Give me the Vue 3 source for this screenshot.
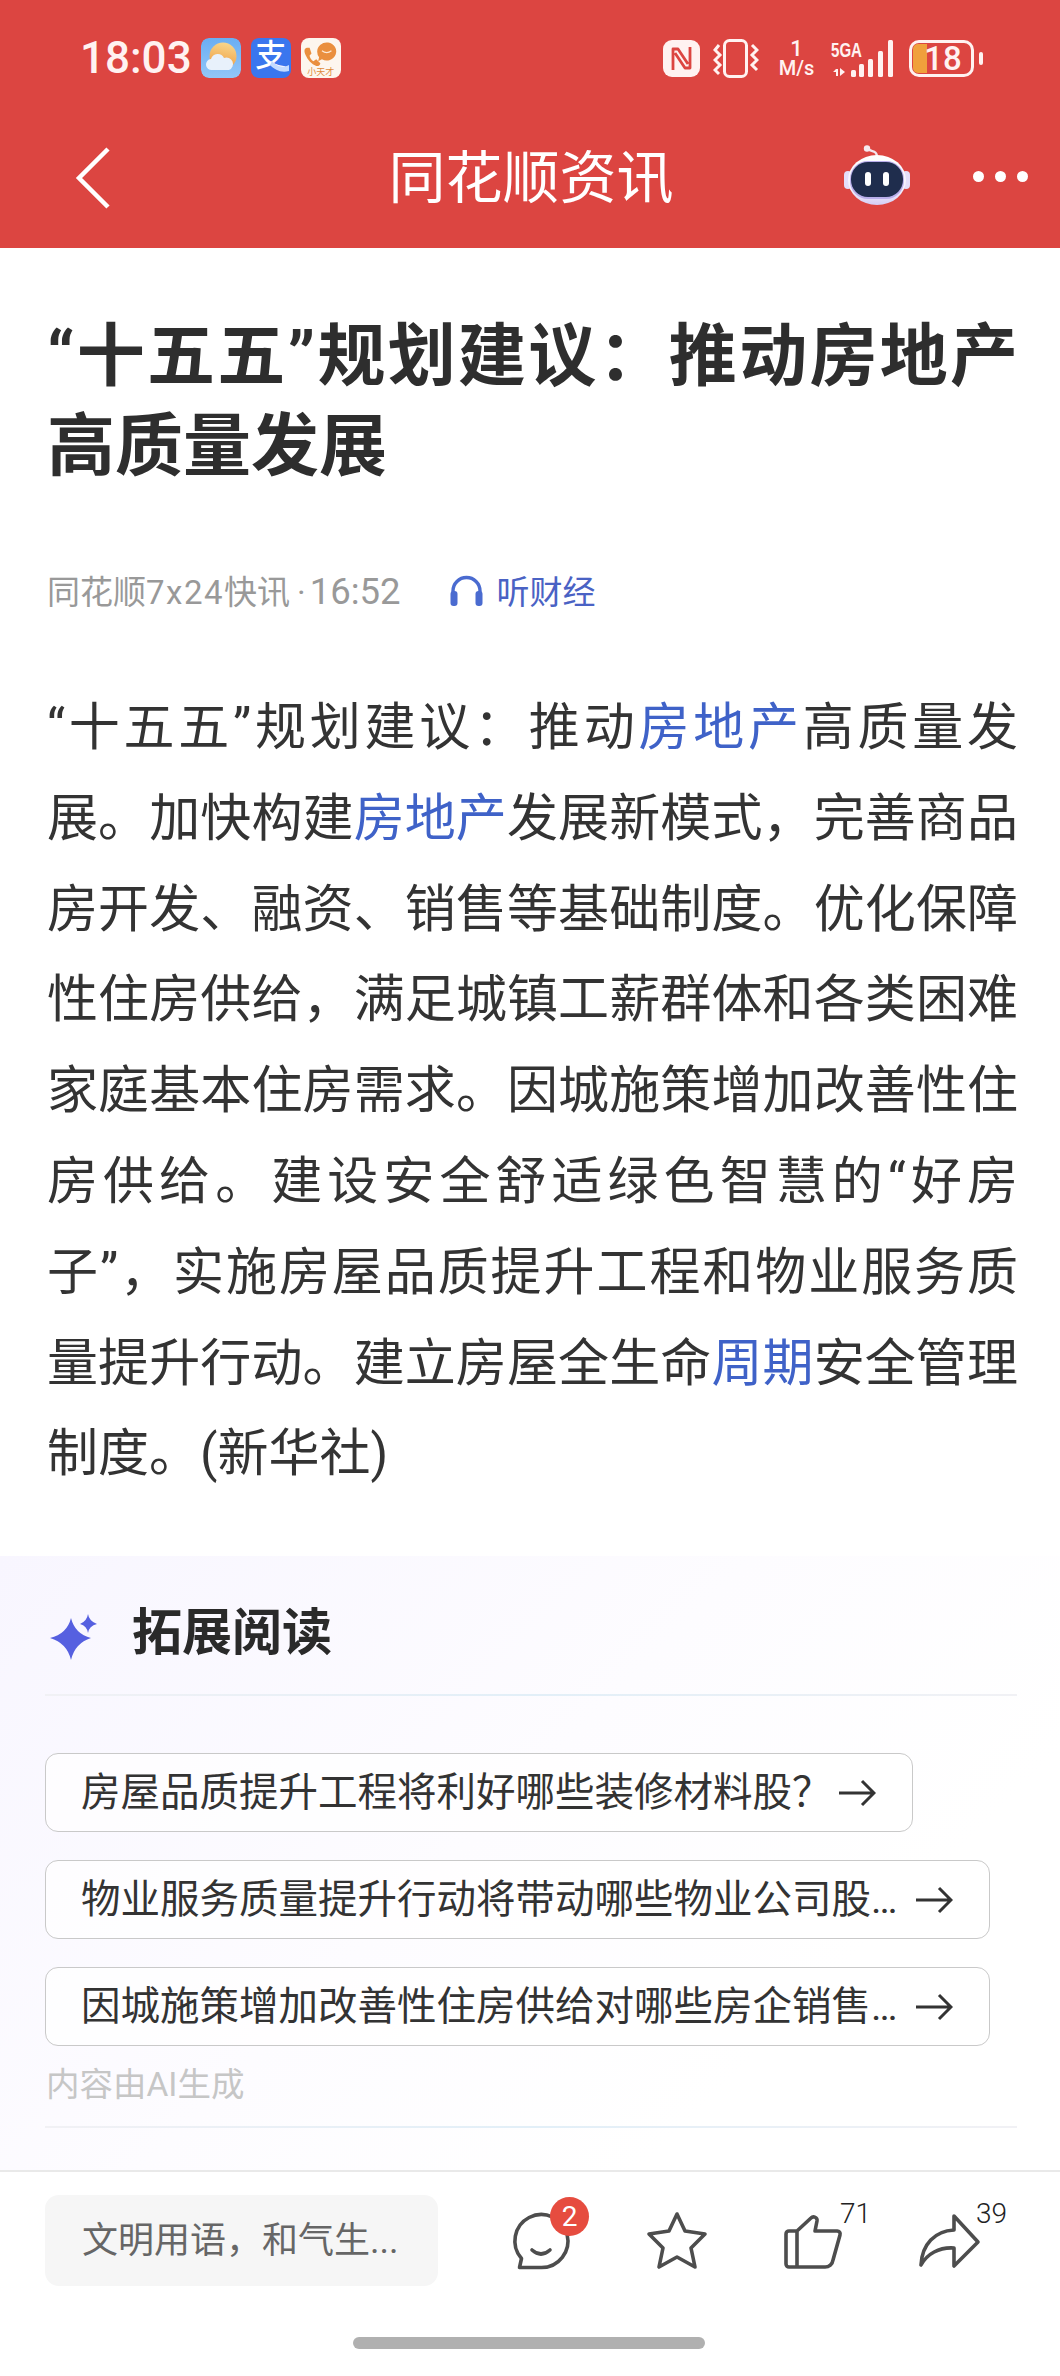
<template>
  <div class="page">
    <header class="top">
      <div class="status">
        <div class="status-left">
          <span class="clock">18:03</span>
          <!-- 天气 -->
          <svg class="app-icon" viewBox="0 0 40 40">
            <defs>
              <linearGradient id="sky" x1="0" y1="0" x2="0" y2="1">
                <stop offset="0" stop-color="#6aaef3" />
                <stop offset="1" stop-color="#93c6f8" />
              </linearGradient>
              <linearGradient id="sun" x1="0.6" y1="0" x2="0.4" y2="1">
                <stop offset="0" stop-color="#f8d68c" />
                <stop offset="1" stop-color="#ef9a3c" />
              </linearGradient>
            </defs>
            <rect width="40" height="40" rx="8" fill="url(#sky)" />
            <circle cx="22" cy="18" r="13.5" fill="url(#sun)" />
            <path d="M11 32 a5.5 5.5 0 0 1 -1 -11 a7 7 0 0 1 13 -1 a6 6 0 0 1 5 12 z" fill="#e8f1fb" />
          </svg>
          <!-- 支付宝 -->
          <div class="app-icon alipay">
            <span>支</span>
            <svg class="swoosh" viewBox="0 0 40 40">
              <path d="M21 23 C26 29 32 30 38 27 L38 33 C30 35 24 32 19 27 Z" fill="#c5dbff" />
            </svg>
          </div>
          <!-- 小天才 -->
          <div class="app-icon genius">
            <svg viewBox="0 0 40 28">
              <path d="M16 11 a10 9.5 0 1 1 5 8 l-4 2 l1 -4 a10 10 0 0 1 -2 -6 z" fill="#ea8f3e" />
              <path d="M21 10 q5 4 10 0" fill="none" stroke="#fde9d4" stroke-width="1.2" />
              <path d="M5 7 c-3 1 -3 4 -1 8 c2 5 6 9 11 11 c3 1 5 -2 4 -3 l-4 -4 l-3 2 c-2 -1 -4 -4 -4 -6 l2 -2 l-2 -6 z" fill="#ea8f3e" />
            </svg>
            <span>小天才</span>
          </div>
        </div>
        <div class="status-right">
          <svg class="ic-nfc" viewBox="0 0 37 37">
            <rect width="37" height="37" rx="9" fill="#fff2f1" />
            <path d="M10 30 V9 H15 L25 24 M27 7 V28 H22 L12 13" fill="none" stroke="#dc4541" stroke-width="2.8" stroke-linejoin="round" />
          </svg>
          <svg class="ic-vibrate" viewBox="0 0 46 39">
            <rect x="11.5" y="1.5" width="22" height="36" rx="5" fill="none" stroke="#fff2f1" stroke-width="3" />
            <path d="M6 6 L2 11 L7 16 L2 21 L7 26 L2 31 L6 35 M39 6 L44 11 L39 16 L44 21 L39 26 L44 31" fill="none" stroke="#fff2f1" stroke-width="3" />
          </svg>
          <div class="speed"><b>1</b><span>M/s</span></div>
          <svg class="ic-signal" viewBox="0 0 64 39">
            <text x="1" y="18" textLength="31" lengthAdjust="spacingAndGlyphs" class="sig-text">5GA</text>
            <path d="M6 30 h2 v7 h-2 v-4 h-3 z M10 29 l5 4 l-5 4 z" fill="#fff2f1" />
            <rect x="21" y="31" width="5" height="7" rx="1.5" fill="#fff2f1" />
            <rect x="29" y="25" width="5" height="13" rx="1.5" fill="#fff2f1" />
            <rect x="38" y="20" width="5" height="18" rx="1.5" fill="#fff2f1" />
            <rect x="48" y="12" width="5" height="26" rx="1.5" fill="#fff2f1" />
            <rect x="58" y="1" width="5" height="37" rx="1.5" fill="#fff2f1" />
          </svg>
          <div class="battery">
            <div class="battery-body">
              <i class="battery-fill"></i>
              <span>18</span>
            </div>
            <i class="battery-tip"></i>
          </div>
        </div>
      </div>
      <div class="nav">
        <svg class="back" viewBox="0 0 36 64">
          <path d="M33 3 L4 32 L33 61" fill="none" stroke="#fff" stroke-width="4.5" />
        </svg>
        <h2 class="nav-title">同花顺资讯</h2>
        <svg class="robot" viewBox="0 0 66 60">
          <defs>
            <linearGradient id="shell" x1="0" y1="0" x2="0" y2="1">
              <stop offset="0" stop-color="#ffffff" />
              <stop offset="0.7" stop-color="#f3effc" />
              <stop offset="1" stop-color="#d5cdf5" />
            </linearGradient>
          </defs>
          <path d="M23 3 C27 8 32 4 33 11" fill="none" stroke="#f3e6ee" stroke-width="2.4" />
          <circle cx="23" cy="3.5" r="3.2" fill="#f6e9ef" />
          <rect x="0" y="26" width="8" height="18" rx="4" fill="#e4defa" />
          <rect x="58" y="26" width="8" height="18" rx="4" fill="#e4defa" />
          <ellipse cx="33" cy="35" rx="29" ry="25" fill="url(#shell)" />
          <rect x="6" y="16" width="54" height="38" rx="18" fill="#b9aeea" />
          <rect x="7" y="17" width="52" height="35" rx="17" fill="#1f2d4d" />
          <rect x="21" y="27" width="6" height="14" rx="3" fill="#fff" />
          <rect x="39" y="27" width="6" height="14" rx="3" fill="#fff" />
        </svg>
        <div class="more"><i></i><i></i><i></i></div>
      </div>
    </header>

    <article class="article">
      <h1 class="title">“十五五”规划建议：推动房地产高质量发展</h1>
      <div class="meta">
        <span>同花顺<span class="num">7x24</span>快讯<span class="dot">·</span><span class="time">16:52</span></span>
        <a class="listen">
          <svg class="headset" viewBox="0 0 35 32">
            <path d="M4 28 V17 a13.5 13.5 0 0 1 27 0 V28" fill="none" stroke="#4a6bd0" stroke-width="3.4" />
            <rect x="1.5" y="17" width="7" height="15" rx="3" fill="#4a6bd0" />
            <rect x="26.5" y="17" width="7" height="15" rx="3" fill="#4a6bd0" />
          </svg>
          听财经
        </a>
      </div>
      <p class="body">“十五五”规划建议：推动<span class="link">房地产</span>高质量发展。加快构建<span class="link">房地产</span>发展新模式，完善商品房开发、融资、销售等基础制度。优化保障性住房供给，满足城镇工薪群体和各类困难家庭基本住房需求。因城施策增加改善性住房供给。建设安全舒适绿色智慧的“好房子”，实施房屋品质提升工程和物业服务质量提升行动。建立房屋全生命<span class="link">周期</span>安全管理制度。(新华社)</p>
    </article>

    <section class="extend">
      <div class="extend-head">
        <svg class="spark" viewBox="0 0 47 46">
          <path d="M21 4 Q25 20 41 24 Q25 29 21 46 Q17 29 0 24 Q17 20 21 4 Z" fill="#5660e0" />
          <path d="M38 0 Q39 7 47 10 Q39 12 38 19 Q37 12 30 10 Q37 7 38 0 Z" fill="#5660e0" />
        </svg>
        <h3>拓展阅读</h3>
      </div>
      <div class="rule"></div>
      <div class="questions">
        <div v-for="q in questions" :key="q.text" class="question" :class="{ long: q.long }">
          <span class="q-text">{{ q.text }}</span>
          <svg class="q-arrow" viewBox="0 0 38 28">
            <path d="M1 14 H36 M24 2 L36 14 L24 26" fill="none" stroke="#333" stroke-width="3" />
          </svg>
        </div>
      </div>
      <p class="ai-note">内容由AI生成</p>
      <div class="rule"></div>
    </section>

    <footer class="bottom">
      <div class="bar">
        <div class="comment-input"><span>文明用语，和气生...</span></div>
        <div class="actions">
          <div class="action">
            <svg viewBox="0 0 60 60">
              <path d="M8.5 57.5 H30.5 A26.5 26.5 0 1 0 10.5 48.5 Z" class="line" />
              <path d="M21 40 Q30 48 39 40" class="line" />
            </svg>
            <span class="badge">2</span>
          </div>
          <div class="action">
            <svg viewBox="0 0 60 60">
              <path d="M30 4 L38 21 L58 24 L44 38 L48 57 L30 47 L12 57 L16 38 L2 24 L22 21 Z" class="line" />
            </svg>
          </div>
          <div class="action">
            <svg viewBox="0 0 60 60">
              <path d="M14 21 L28 8 a3.5 3.5 0 0 1 6 3 L32 21 H54 a3 3 0 0 1 3 4 L50 50 a8 8 0 0 1 -8 7 H6 a3 3 0 0 1 -3 -3 V24 a3 3 0 0 1 3 -3 Z M14 21 V57" class="line" />
            </svg>
            <span class="count">71</span>
          </div>
          <div class="action">
            <svg viewBox="0 0 60 60">
              <path d="M35 6 L59 32 L35 56 V38 C20 37 8 44 2 55 C3 34 16 21 35 20 Z" class="line" />
            </svg>
            <span class="count">39</span>
          </div>
        </div>
      </div>
      <div class="home-bar"></div>
    </footer>
  </div>
</template>

<script setup>
// 拓展阅读的问题列表，long 的条目占满最大宽度
const questions = [
  { text: '房屋品质提升工程将利好哪些装修材料股？' },
  { text: '物业服务质量提升行动将带动哪些物业公司股…', long: true },
  { text: '因城施策增加改善性住房供给对哪些房企销售…', long: true }
]
</script>

<style>
html,
body {
  margin: 0;
  background: #fff;
}
</style>

<style scoped>
.page {
  width: 1060px;
  height: 2376px;
  overflow: hidden;
  background: #fff;
  font-family: Roboto, "Noto Sans CJK SC", sans-serif;
  color: #333;
}

/* 顶部红色区域 */
.top {
  height: 248px;
  background: #dc4541;
  color: #fff;
}

.status {
  height: 116px;
  display: flex;
  align-items: center;
  justify-content: space-between;
  padding: 0 77px 0 80px;
  color: #fff2f1;
}

.status-left {
  display: flex;
  align-items: center;
}

.clock {
  font-size: 44px;
  font-weight: 500;
  margin-right: 9px;
}

.app-icon {
  width: 40px;
  height: 40px;
  margin-right: 10px;
  border-radius: 8px;
  overflow: hidden;
  flex-shrink: 0;
}

.alipay {
  position: relative;
  background: #3a76ee;
  text-align: center;
  color: #fff;
  font-size: 31px;
  line-height: 36px;
  font-weight: 500;
}

.swoosh {
  position: absolute;
  left: 0;
  top: 0;
  width: 40px;
  height: 40px;
}

.genius {
  background: #fdf6ee;
  display: flex;
  flex-direction: column;
  align-items: center;
  margin-right: 0;
}

.genius svg {
  width: 38px;
  height: 27px;
  margin-top: 3px;
}

.genius span {
  font-size: 9px;
  line-height: 9px;
  color: #e08a3a;
  white-space: nowrap;
}

.status-right {
  display: flex;
  align-items: center;
}

.ic-nfc {
  width: 37px;
  height: 37px;
  margin-right: 13px;
}

.ic-vibrate {
  width: 46px;
  height: 39px;
  margin-right: 15px;
}

.speed {
  width: 45px;
  margin-right: 11px;
  text-align: center;
  display: flex;
  flex-direction: column;
  color: #fff2f1;
}

.speed b {
  font-size: 22px;
  line-height: 20px;
  font-weight: 500;
}

.speed span {
  font-size: 20px;
  line-height: 19px;
  font-weight: 500;
  white-space: nowrap;
}

.ic-signal {
  width: 64px;
  height: 39px;
  margin-right: 15px;
}

.sig-text {
  font-family: "Liberation Sans", sans-serif;
  font-size: 20px;
  font-weight: 700;
  fill: #fff2f1;
}

.battery {
  display: flex;
  align-items: center;
}

.battery-body {
  position: relative;
  box-sizing: border-box;
  width: 65px;
  height: 37px;
  border: 3px solid #fff2f1;
  border-radius: 10px;
}

.battery-fill {
  position: absolute;
  left: 1px;
  top: 1px;
  bottom: 1px;
  width: 14px;
  border-radius: 5px 0 0 5px;
  background: #f0a03c;
}

.battery-body span {
  position: relative;
  display: block;
  text-align: center;
  font-size: 33px;
  line-height: 31px;
  font-weight: 500;
  color: #fff2f1;
  padding-left: 3px;
}

.battery-tip {
  width: 4px;
  height: 13px;
  margin-left: 5px;
  background: #fff2f1;
  border-radius: 2px;
}

/* 导航栏 */
.nav {
  position: relative;
  height: 124px;
  display: flex;
  align-items: center;
  justify-content: center;
}

.back {
  position: absolute;
  left: 75px;
  top: 30px;
  width: 36px;
  height: 64px;
}

.nav-title {
  margin: 2px 0 0 2px;
  font-size: 57px;
  font-weight: 400;
  line-height: 72px;
}

.robot {
  position: absolute;
  left: 844px;
  top: 29px;
  width: 66px;
  height: 60px;
}

.more {
  position: absolute;
  left: 973px;
  top: 55px;
  display: flex;
  gap: 11px;
}

.more i {
  width: 11px;
  height: 11px;
  border-radius: 50%;
  background: #fff;
}

/* 正文 */
.article {
  padding: 64px 42px 0 47px;
}

.title {
  margin: 0;
  font-size: 68px;
  line-height: 90px;
  font-weight: 700;
  text-align: justify;
  color: #2e2e2e;
}

.meta {
  margin-top: 76px;
  height: 44px;
  display: flex;
  align-items: center;
  font-size: 33px;
  color: #999;
}

.num {
  letter-spacing: 1.5px;
}

.dot {
  margin: 0 4px 0 7px;
}

.time {
  font-size: 36.5px;
}

.listen {
  display: flex;
  align-items: center;
  margin-left: 48px;
  color: #4a62c4;
}

.headset {
  width: 35px;
  height: 32px;
  margin-right: 13px;
}

.body {
  margin: 71px 0 0;
  font-size: 51px;
  line-height: 90.8px;
  text-align: justify;
  color: #333;
}

.link {
  color: #3f62c8;
}

/* 拓展阅读 */
.extend {
  margin-top: 56px;
  height: 614px;
  box-sizing: border-box;
  padding: 46px 43px 0 45px;
  background: linear-gradient(135deg, #f8f6ff 0%, #fdfcff 45%, #fff 75%);
}

.extend-head {
  height: 62px;
  display: flex;
  align-items: center;
  padding-left: 5px;
}

.spark {
  width: 47px;
  height: 46px;
  margin-right: 35px;
  margin-top: 8px;
}

.extend-head h3 {
  margin: 0;
  font-size: 50px;
  line-height: 62px;
  font-weight: 700;
  color: #2a2a2a;
}

.rule {
  height: 2px;
  margin-top: 30px;
  background: linear-gradient(90deg, #f1f1f5 0%, #e2eff8 50%, #f1f1f5 100%);
}

.questions {
  margin-top: 57px;
  display: flex;
  flex-direction: column;
  align-items: flex-start;
  gap: 28px;
}

.question {
  box-sizing: border-box;
  height: 79px;
  display: flex;
  align-items: center;
  justify-content: space-between;
  padding: 0 36px 0 35px;
  border: 1.5px solid #c9c9c9;
  border-radius: 13px;
  background: rgba(255, 255, 255, 0.7);
}

.question.long {
  width: 945px;
}

.q-text {
  font-size: 39.5px;
  line-height: 50px;
  color: #333;
  white-space: nowrap;
}

.q-arrow {
  width: 38px;
  height: 28px;
  margin-left: 6px;
  flex-shrink: 0;
}

.ai-note {
  margin: 19px 0 0;
  padding-left: 1px;
  font-size: 33.5px;
  line-height: 40px;
  color: #c6c6c6;
}

.ai-note + .rule {
  margin-top: 21px;
}

/* 底部操作栏 */
.bottom {
  height: 206px;
  box-sizing: border-box;
  border-top: 2px solid #e9e9e9;
  position: relative;
}

.bar {
  display: flex;
  padding: 23px 0 0 45px;
}

.comment-input {
  box-sizing: border-box;
  width: 393px;
  height: 91px;
  padding: 0 0 8px 37px;
  display: flex;
  align-items: center;
  border-radius: 14px;
  background: #f6f6f6;
  font-size: 36px;
  color: #666;
}

.actions {
  display: flex;
  gap: 76px;
  margin-left: 73px;
  padding-top: 15px;
}

.action {
  position: relative;
  width: 60px;
  height: 60px;
}

.action svg {
  display: block;
  width: 60px;
  height: 60px;
  overflow: visible;
}

.line {
  fill: none;
  stroke: #4d4d4d;
  stroke-width: 3.6;
  stroke-linejoin: round;
  stroke-linecap: round;
}

.badge {
  position: absolute;
  left: 39px;
  top: -13px;
  width: 39px;
  height: 39px;
  border-radius: 50%;
  background: #e64c3f;
  color: #fff;
  font-size: 28px;
  line-height: 39px;
  text-align: center;
}

.count {
  position: absolute;
  left: 57px;
  top: -10px;
  font-size: 28px;
  line-height: 28px;
  font-weight: 300;
  color: #222;
}

.home-bar {
  position: absolute;
  left: 353px;
  top: 165px;
  width: 352px;
  height: 12px;
  border-radius: 6px;
  background: #b0b0b0;
}
</style>
